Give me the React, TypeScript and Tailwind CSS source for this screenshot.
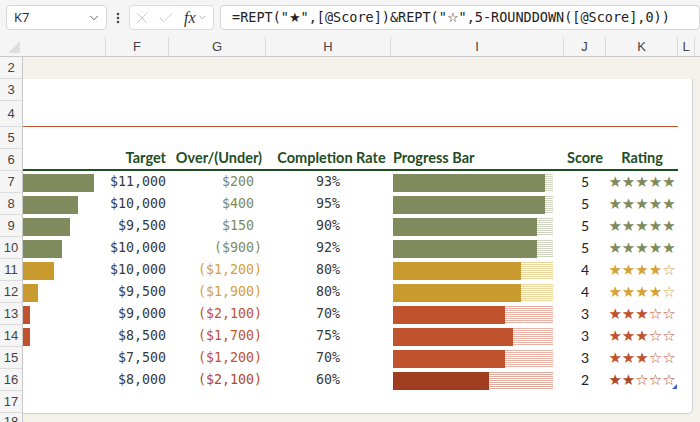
import React from 'react';
import { ChevronDown, Check, X, EllipsisVertical } from 'lucide-react';

interface Row {
  num: number;
  eBar: number;
  target: string;
  over: string;
  negative: boolean;
  rate: string;
  fill: number;
  score: number;
  tone: 'olive' | 'gold' | 'red' | 'dark';
}

const TONES = {
  olive: {
    bar: 'bg-[#7f8b5c]',
    text: 'text-[#7f8b5c]',
    stripe: 'bg-[repeating-linear-gradient(180deg,#cfd3c2_0px,#cfd3c2_1px,#ffffff_1px,#ffffff_2px)]',
  },
  gold: {
    bar: 'bg-[#c99a2e]',
    text: 'text-[#d4a236]',
    stripe: 'bg-[repeating-linear-gradient(180deg,#ecd59c_0px,#ecd59c_1px,#ffffff_1px,#ffffff_2px)]',
  },
  red: {
    bar: 'bg-[#c0532e]',
    text: 'text-[#c0532e]',
    stripe: 'bg-[repeating-linear-gradient(180deg,#e6b2a6_0px,#e6b2a6_1px,#ffffff_1px,#ffffff_2px)]',
  },
  dark: {
    bar: 'bg-[#9f3d1f]',
    text: 'text-[#b04a26]',
    stripe: 'bg-[repeating-linear-gradient(180deg,#e0aca0_0px,#e0aca0_1px,#ffffff_1px,#ffffff_2px)]',
  },
};

const rows: Row[] = [
  { num: 7, eBar: 71, target: '$11,000', over: '$200', negative: false, rate: '93%', fill: 152, score: 5, tone: 'olive' },
  { num: 8, eBar: 55, target: '$10,000', over: '$400', negative: false, rate: '95%', fill: 152, score: 5, tone: 'olive' },
  { num: 9, eBar: 47, target: '$9,500', over: '$150', negative: false, rate: '90%', fill: 144, score: 5, tone: 'olive' },
  { num: 10, eBar: 39, target: '$10,000', over: '($900)', negative: true, rate: '92%', fill: 144, score: 5, tone: 'olive' },
  { num: 11, eBar: 31, target: '$10,000', over: '($1,200)', negative: true, rate: '80%', fill: 128, score: 4, tone: 'gold' },
  { num: 12, eBar: 15, target: '$9,500', over: '($1,900)', negative: true, rate: '80%', fill: 128, score: 4, tone: 'gold' },
  { num: 13, eBar: 7, target: '$9,000', over: '($2,100)', negative: true, rate: '70%', fill: 112, score: 3, tone: 'red' },
  { num: 14, eBar: 7, target: '$8,500', over: '($1,700)', negative: true, rate: '75%', fill: 120, score: 3, tone: 'red' },
  { num: 15, eBar: 0, target: '$7,500', over: '($1,200)', negative: true, rate: '70%', fill: 112, score: 3, tone: 'red' },
  { num: 16, eBar: 0, target: '$8,000', over: '($2,100)', negative: true, rate: '60%', fill: 96, score: 2, tone: 'dark' },
];

const columns = [
  { label: '', w: 'w-[83px]' },
  { label: 'F', w: 'w-[63px]' },
  { label: 'G', w: 'w-[97px]' },
  { label: 'H', w: 'w-[125px]' },
  { label: 'I', w: 'w-[173px]' },
  { label: 'J', w: 'w-[42px]' },
  { label: 'K', w: 'w-[72px]' },
  { label: 'L', w: 'w-[17px]' },
];

const rowHeaders = [
  { n: 2, h: 'h-[22px]' },
  { n: 3, h: 'h-[22px]' },
  { n: 4, h: 'h-[26px]' },
  ...[5, 6, 7, 8, 9, 10, 11, 12, 13, 14, 15, 16, 17].map((n) => ({ n, h: 'h-[22px]' })),
];

const mono = "font-['DejaVu_Sans_Mono','Liberation_Mono',monospace]";
const starFont = "font-['DejaVu_Sans',sans-serif]";

const App: React.FC = () => {
  return (
    <div className="w-[700px] h-[422px] overflow-hidden bg-[#f5f5f5] font-['Liberation_Sans',sans-serif] text-[#333]">
      {/* Formula bar */}
      <div className="h-[37px] flex items-start pt-[5px] pl-[6px]">
        <div className="w-[101px] h-[25px] bg-white border border-[#d6d6d6] rounded-[4px] flex items-center justify-between pl-[7px] pr-[5px]">
          <span className="text-[13px] text-[#222] font-['Open_Sans',sans-serif]">K7</span>
          <ChevronDown size={14} strokeWidth={1.6} className="text-[#555]" />
        </div>
        <div className="w-[22px] h-[25px] flex items-center justify-center">
          <EllipsisVertical size={14} strokeWidth={2.4} className="text-[#444]" />
        </div>
        <div className="w-[85px] h-[25px] bg-white border border-[#dcdcdc] rounded-[4px] flex items-center pl-[3px] gap-[6px]">
          <X size={18} strokeWidth={1.1} className="text-[#bdbdbd]" />
          <Check size={18} strokeWidth={1.1} className="text-[#bdbdbd]" />
          <span className="ml-[3px] text-[16px] italic font-['Liberation_Serif',serif] text-[#333] leading-none">fx</span>
          <ChevronDown size={11} strokeWidth={1.4} className="-ml-[5px] text-[#888]" />
        </div>
        <div className="ml-[6px] flex-1 h-[25px] bg-white border border-[#d6d6d6] rounded-[4px] flex items-center pl-[11px]">
          <span className={`${mono} text-[13.5px] text-[#222] whitespace-pre`}>
            =REPT("<span className={`${starFont} text-[13px]`}>★</span>",[@Score])&amp;REPT("
            <span className={`${starFont} text-[13px]`}>☆</span>",5-ROUNDDOWN([@Score],0))
          </span>
        </div>
      </div>

      {/* Column headers */}
      <div className="h-[20px] flex border-b border-[#c8c8c8]">
        <div className="w-[23px] flex items-end justify-end pr-[3px] pb-[3px]">
          <div className="w-0 h-0 border-l-[12px] border-l-transparent border-b-[12px] border-b-[#dedede]" />
        </div>
        {columns.map((c, i) => (
          <div
            key={i}
            className={`${c.w} flex items-center justify-center border-r border-[#dadada] text-[13px] text-[#444]`}
          >
            {c.label}
          </div>
        ))}
      </div>

      {/* Grid */}
      <div className="flex">
        <div className="w-[23px] border-r border-[#c8c8c8] bg-[#f5f5f5]">
          {rowHeaders.map((r) => (
            <div
              key={r.n}
              className={`${r.h} flex items-center justify-center border-b border-[#dddddd] text-[13px] text-[#444]`}
            >
              {r.n}
            </div>
          ))}
          <div className="h-[9px] overflow-hidden flex justify-center text-[13px] text-[#444] leading-none pt-[2px]">18</div>
        </div>

        <div className="flex-1 bg-[#f4f0ea]">
          <div className="h-[22px]" />
          <div className="w-[670px] h-[335px] bg-white border-r border-b border-[#cfcfcf] rounded-br-[5px]">
            <div className="h-[22px]" />
            <div className="h-[26px] w-[655px] border-b border-[#c0532e]" />
            <div className="h-[22px]" />

            {/* Header row 6 */}
            <div className="h-[22px] w-[655px] flex border-b-2 border-[#1f4d24] font-['Lato',sans-serif] font-bold text-[14.5px] text-[#1f4d24] leading-[18px]">
              <div className="w-[83px]" />
              <div className="w-[63px] text-right pr-[3px]">Target</div>
              <div className="w-[97px] text-right pr-[4px]">Over/(Under)</div>
              <div className="w-[125px] text-center pl-[6px]">Completion Rate</div>
              <div className="w-[173px] pl-[2px]">Progress Bar</div>
              <div className="w-[42px] text-center">Score</div>
              <div className="w-[72px] text-center">Rating</div>
            </div>

            {rows.map((r) => {
              const t = TONES[r.tone];
              return (
                <div key={r.num} className="h-[22px] w-[670px] flex">
                  <div className="w-[83px] pt-[3px]">
                    {r.eBar > 0 && <div className={`h-[18px] ${t.bar}`} style={{ width: r.eBar }} />}
                  </div>
                  <div className={`w-[63px] text-right pr-[3px] ${mono} text-[13.3px] leading-[22px] text-[#3a3a3a]`}>
                    {r.target}
                  </div>
                  <div className={`w-[97px] text-right pr-[4px] ${mono} text-[13.3px] leading-[22px] whitespace-pre ${t.text}`}>
                    {r.negative ? r.over : `${r.over} `}
                  </div>
                  <div className={`w-[125px] text-right pr-[51px] ${mono} text-[13.3px] leading-[22px] text-[#3a3a3a]`}>
                    {r.rate}
                  </div>
                  <div className="w-[173px] pl-[2px] pt-[3px]">
                    <div className="w-[160px] h-[18px] flex">
                      <div className={`h-full ${t.bar}`} style={{ width: r.fill }} />
                      <div className={`h-full flex-1 ${t.stripe}`} />
                    </div>
                  </div>
                  <div className="w-[42px] text-center font-['Lato',sans-serif] text-[14px] leading-[22px] text-[#222]">
                    {r.score}
                  </div>
                  <div className="w-[72px] relative flex items-center justify-center">
                    <span className={`${starFont} text-[15px] leading-none ${t.text}`}>
                      {'★'.repeat(r.score)}
                      {'☆'.repeat(5 - r.score)}
                    </span>
                    {r.num === 16 && (
                      <svg className="absolute right-[1px] bottom-[2px]" width="5" height="5" viewBox="0 0 5 5">
                        <path d="M5 0 L5 5 L0 5 Z" fill="#3b63c4" />
                      </svg>
                    )}
                  </div>
                </div>
              );
            })}
            <div className="h-[22px]" />
          </div>
        </div>
      </div>
    </div>
  );
};

export default App;
